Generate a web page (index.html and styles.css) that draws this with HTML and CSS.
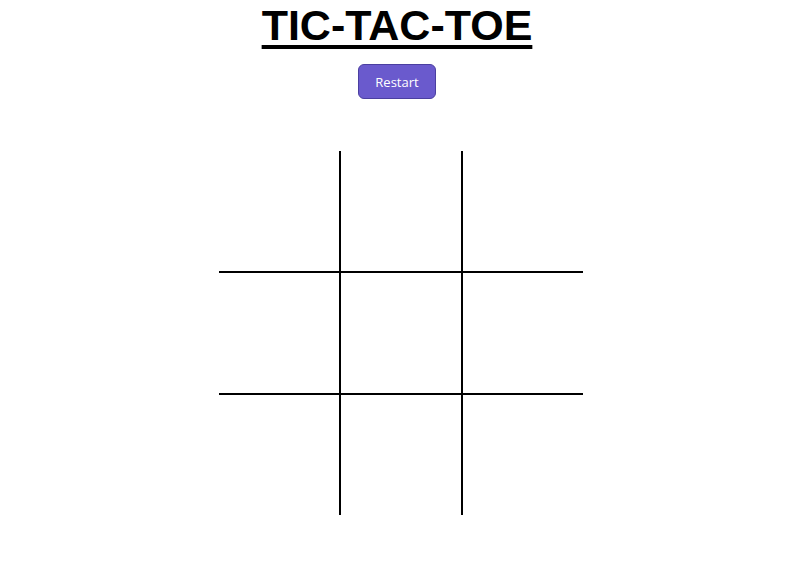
FILE: index.html
```html
<!DOCTYPE html>
<html>
<head>
<meta charset="utf-8">
<title>Tic-Tac-Toe</title>
<link rel="stylesheet" href="styles.css">
</head>
<body>
<header class="top">
  <h1 class="title">TIC-TAC-TOE</h1>
  <button class="restart">Restart</button>
</header>
<main class="board">
  <div class="cell"></div><div class="cell"></div><div class="cell"></div>
  <div class="cell"></div><div class="cell"></div><div class="cell"></div>
  <div class="cell"></div><div class="cell"></div><div class="cell"></div>
</main>
</body>
</html>
```
FILE: styles.css
```css
html, body {
  margin: 0;
  padding: 0;
  background: #fff;
}
.top {
  display: flex;
  flex-direction: column;
  align-items: center;
  padding-top: 1px;
  padding-right: 8px;
}
.title {
  margin: 0;
  font-family: "Liberation Sans", Arial, sans-serif;
  font-weight: bold;
  font-size: 43px;
  line-height: 49px;
  color: #000;
  text-decoration: underline;
  text-decoration-thickness: 4px;
  text-underline-offset: 5px;
}
.restart {
  margin-top: 14px;
  width: 78px;
  height: 35px;
  box-sizing: border-box;
  background: #6a5acd;
  color: #fff;
  border: 1px solid #4b3fa0;
  border-radius: 6px;
  font-family: "Open Sans", sans-serif;
  font-size: 13px;
  padding: 0;
}
.board {
  margin: 52px auto 0;
  width: 364px;
  display: grid;
  grid-template-columns: repeat(3, 120px);
  grid-template-rows: repeat(3, 120px);
  gap: 2px;
  background: #000;
}
.cell {
  background: #fff;
}
```
